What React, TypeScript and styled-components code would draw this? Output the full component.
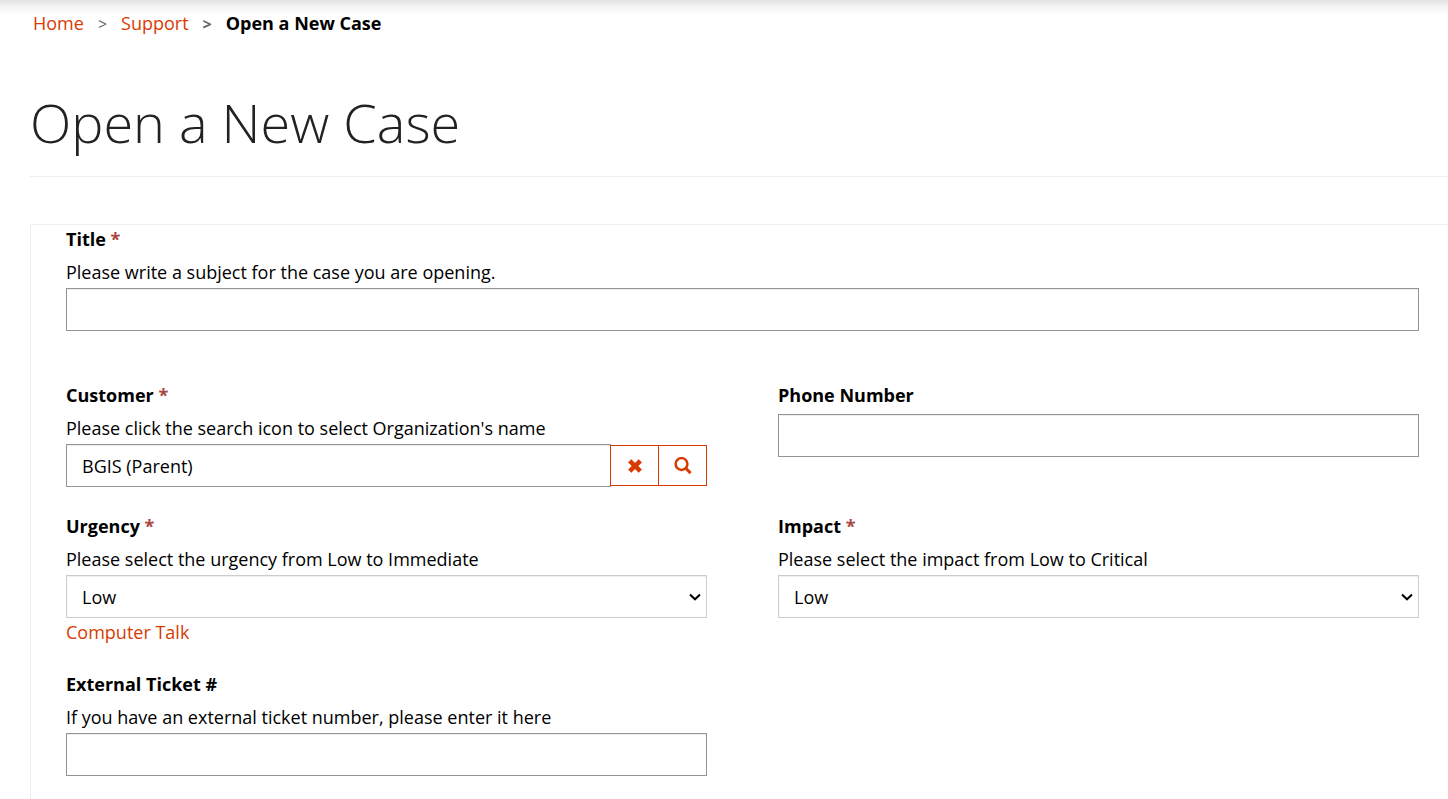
import React from 'react';
import styled, { createGlobalStyle } from 'styled-components';

const GlobalStyle = createGlobalStyle`
  *, *::before, *::after { box-sizing: border-box; }
  body {
    margin: 0;
    background: #fff;
    color: #000;
    font-family: "Segoe UI", "Open Sans", "Noto Sans", sans-serif;
    font-size: 18px;
    line-height: 28px;
  }
`;

const Page = styled.div`
  display: flex;
  flex-direction: column;
  min-height: 100vh;
  padding-left: 30px;
  background: linear-gradient(#e2e2e2, #f6f6f6 8px, #fff 16px) no-repeat top / 100% 16px;
`;

const Breadcrumb = styled.ol`
  display: flex;
  margin: 0;
  padding: 9px 3px 0;
  list-style: none;
`;

const Crumb = styled.li<{ $current?: boolean }>`
  font-weight: ${(p) => (p.$current ? 700 : 400)};
  &:not(:first-child)::before {
    content: '>';
    padding: 0 14px;
    color: #666;
    font-size: 16px;
  }
`;

const Link = styled.a`
  color: #d83b01;
  text-decoration: none;
  &:hover { text-decoration: underline; }
`;

const Heading = styled.h1`
  margin: 41px 0 47px;
  padding-bottom: 10px;
  border-bottom: 1px solid #eee;
  color: #222;
  font-size: 54px;
  font-weight: 300;
  line-height: 87px;
`;

const Form = styled.form`
  flex: 1;
  padding: 0 29px 22px 35px;
  border: solid #eee;
  border-width: 1px 0 0 1px;
`;

const Row = styled.div<{ $columns?: number; $after?: number }>`
  display: grid;
  grid-template-columns: repeat(${(p) => p.$columns ?? 2}, minmax(0, 1fr));
  column-gap: 71px;
  margin-bottom: ${(p) => p.$after ?? 25}px;
`;

const Label = styled.label`
  display: block;
  margin-bottom: 5px;
  font-weight: 700;
`;

const Required = styled.span`
  color: #a94442;
`;

const Help = styled.p`
  margin: 0 0 2px;
`;

const TextInput = styled.input`
  display: block;
  flex: 1;
  width: 100%;
  min-width: 0;
  height: 43px;
  padding: 6px 15px;
  border: 1px solid #949494;
  border-radius: 0;
  background: #fff;
  box-shadow: inset 0 1px 1px rgba(0, 0, 0, 0.075);
  color: #000;
  font: inherit;
`;

const SelectBox = styled.div`
  display: grid;
  align-items: center;
  > * { grid-area: 1 / 1; }
  > svg {
    justify-self: end;
    margin-right: 6px;
    pointer-events: none;
  }
`;

const Select = styled.select`
  appearance: none;
  width: 100%;
  height: 43px;
  padding: 6px 24px 6px 15px;
  border: 1px solid #ccc;
  border-radius: 0;
  background: #fff;
  box-shadow: inset 0 1px 1px rgba(0, 0, 0, 0.075);
  color: #000;
  font: inherit;
`;

const Lookup = styled.div`
  display: flex;
  align-items: center;
`;

const IconButton = styled.button`
  display: flex;
  align-items: center;
  justify-content: center;
  width: 49px;
  height: 41px;
  margin-left: -1px;
  padding: 0;
  border: 1px solid #d83b01;
  background: #fff;
  color: #d83b01;
  cursor: pointer;
`;

const ClearIcon = () => (
  <svg width="16" height="16" viewBox="0 0 16 16" aria-hidden="true">
    <path d="M4.2 1.6 8 5.2l3.8-3.6 2.8 2.8L11 8l3.6 3.6-2.8 2.8L8 10.8l-3.8 3.6-2.8-2.8L5 8 1.4 4.4z" fill="currentColor" stroke="currentColor" strokeWidth=".6" strokeLinejoin="round" />
  </svg>
);

const SearchIcon = () => (
  <svg width="18" height="18" viewBox="0 0 18 18" fill="none" stroke="currentColor" aria-hidden="true">
    <circle cx="7.5" cy="7" r="5.9" strokeWidth="2.5" />
    <path d="m11.8 11.3 4.8 4.8" strokeWidth="3" />
  </svg>
);

const Chevron = () => (
  <svg width="12" height="8" viewBox="0 0 12 8" fill="none" stroke="#000" strokeWidth="2" aria-hidden="true">
    <path d="m1 1.5 5 4.8 5-4.8" />
  </svg>
);

type FieldProps = {
  id: string;
  label: string;
  help?: string;
  required?: boolean;
  children: React.ReactNode;
};

const Field = ({ id, label, help, required, children }: FieldProps) => (
  <div>
    <Label htmlFor={id}>
      {label}
      {required && <Required> *</Required>}
    </Label>
    {help && <Help id={`${id}-help`}>{help}</Help>}
    {children}
  </div>
);

const SelectInput = ({ id, options }: { id: string; options: string[] }) => (
  <SelectBox>
    <Select id={id} defaultValue={options[0]} aria-describedby={`${id}-help`}>
      {options.map((option) => (
        <option key={option}>{option}</option>
      ))}
    </Select>
    <Chevron />
  </SelectBox>
);

export default function App() {
  return (
    <>
      <GlobalStyle />
      <Page>
        <nav aria-label="Breadcrumb">
          <Breadcrumb>
            <Crumb><Link href="#home">Home</Link></Crumb>
            <Crumb><Link href="#support">Support</Link></Crumb>
            <Crumb $current aria-current="page">Open a New Case</Crumb>
          </Breadcrumb>
        </nav>
        <Heading>Open a New Case</Heading>
        <Form onSubmit={(e) => e.preventDefault()}>
          <Row $columns={1} $after={50}>
            <Field id="title" label="Title" required help="Please write a subject for the case you are opening.">
              <TextInput id="title" type="text" required aria-describedby="title-help" />
            </Field>
          </Row>
          <Row>
            <Field id="customer" label="Customer" required help="Please click the search icon to select Organization's name">
              <Lookup>
                <TextInput id="customer" type="text" readOnly value="BGIS (Parent)" aria-describedby="customer-help" />
                <IconButton type="button" aria-label="Clear customer"><ClearIcon /></IconButton>
                <IconButton type="button" aria-label="Search customers"><SearchIcon /></IconButton>
              </Lookup>
            </Field>
            <Field id="phone" label="Phone Number">
              <TextInput id="phone" type="tel" />
            </Field>
          </Row>
          <Row $after={24}>
            <div>
              <Field id="urgency" label="Urgency" required help="Please select the urgency from Low to Immediate">
                <SelectInput id="urgency" options={['Low', 'Medium', 'High', 'Immediate']} />
              </Field>
              <Link href="#computer-talk">Computer Talk</Link>
            </div>
            <Field id="impact" label="Impact" required help="Please select the impact from Low to Critical">
              <SelectInput id="impact" options={['Low', 'Medium', 'High', 'Critical']} />
            </Field>
          </Row>
          <Row $after={0}>
            <Field id="ticket" label="External Ticket #" help="If you have an external ticket number, please enter it here">
              <TextInput id="ticket" type="text" aria-describedby="ticket-help" />
            </Field>
          </Row>
        </Form>
      </Page>
    </>
  );
}
